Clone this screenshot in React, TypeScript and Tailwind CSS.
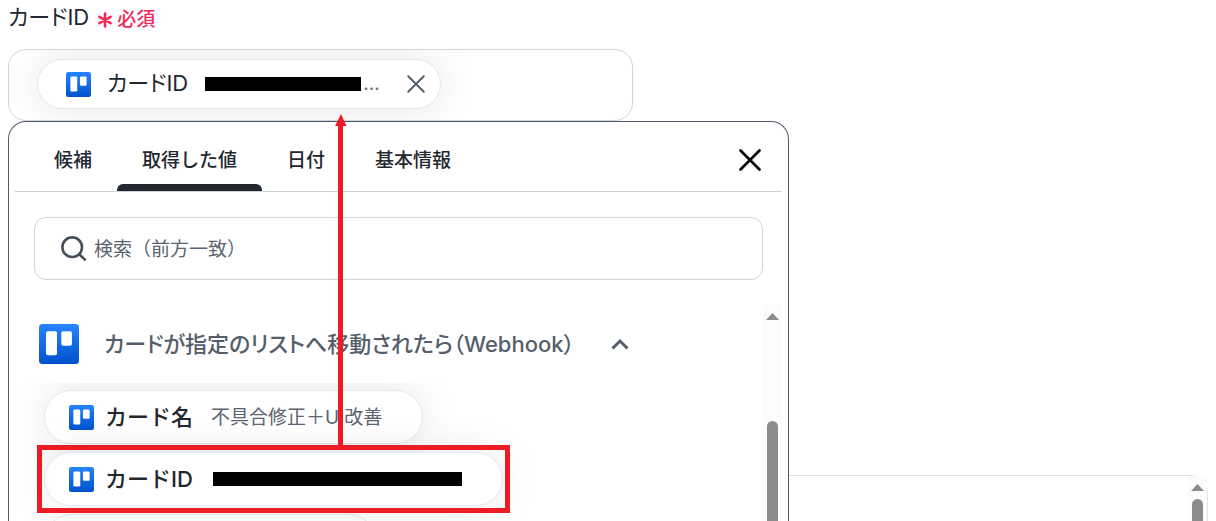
import { useState } from "react";

const TrelloIcon = ({ className, id }: { className: string; id: string }) => (
  <svg viewBox="0 0 40 40" className={className} aria-hidden="true">
    <defs>
      <linearGradient id={id} x1="0" y1="0" x2="0" y2="1">
        <stop offset="0" stopColor="#2684ff" />
        <stop offset="1" stopColor="#0052cc" />
      </linearGradient>
    </defs>
    <rect width="40" height="40" rx="3.5" fill={`url(#${id})`} />
    <rect x="7" y="7.3" width="11" height="24" rx="2" fill="#fff" />
    <rect x="22.3" y="7.3" width="10.7" height="14.5" rx="2" fill="#fff" />
  </svg>
);

const CrossIcon = ({ className, width }: { className: string; width: number }) => (
  <svg
    viewBox="0 0 22 22"
    className={className}
    fill="none"
    stroke="currentColor"
    strokeWidth={width}
    strokeLinecap="round"
    aria-hidden="true">
    <path d="M1.5 1.5 20.5 20.5M20.5 1.5 1.5 20.5" />
  </svg>
);

const Scrollbar = ({ className }: { className: string }) => (
  <div
    className={`flex w-[19px] shrink-0 flex-col items-center bg-[#fbfbfb] pt-2 ${className}`}>
    <svg viewBox="0 0 13 7" className="h-[7px] w-[13px] shrink-0" aria-hidden="true">
      <path d="M6.5 0 13 7H0Z" fill="#8b8b8b" />
    </svg>
    <div className="w-[11px] flex-1 rounded-t-full bg-[#8b8b8b]" />
  </div>
);

const tabs = ["候補", "取得した値", "日付", "基本情報"];

const values = [
  { name: "カード名", value: "不具合修正＋UI改善", picked: false },
  { name: "カードID", value: "", picked: true },
];

export default function App() {
  const [activeTab, setActiveTab] = useState("取得した値");
  const [open, setOpen] = useState(true);

  return (
    <main className="relative flex h-screen flex-col overflow-hidden bg-white px-2 font-['Inter','Noto_Sans_CJK_JP',sans-serif] text-[#23272f]">
      <label
        htmlFor="card-id"
        className="flex h-[49px] shrink-0 items-start pt-[3px] text-[22px] leading-7 [font-feature-settings:'palt']">
        カードID
        <span className="flex items-center pt-[3px] pl-[9px] text-[19px] font-medium text-[#f12b5b]">
          <svg
            viewBox="0 0 14 16"
            className="mr-[5px] h-4 w-[14px]"
            fill="none"
            stroke="currentColor"
            strokeWidth="2.6"
            strokeLinecap="round"
            aria-hidden="true">
            <path d="M7 1.5v13M1.4 4.8l11.2 6.4M12.6 4.8 1.4 11.2" />
          </svg>
          必須
        </span>
      </label>

      <div className="flex h-[72px] w-full max-w-[625px] shrink-0 items-center overflow-hidden rounded-[18px] border border-[#cfd4dc] pr-4 pb-[2px] pl-7">
        <div className="flex h-[50px] shrink-0 items-center rounded-full border border-[#e4e7ee] bg-white pr-[15px] pl-7 shadow-[0_0_40px_rgba(0,0,0,0.1)]">
          <TrelloIcon className="size-[25px]" id="trello-field" />
          <span className="pb-[2px] pl-4 text-[22px] leading-7 [font-feature-settings:'palt']">
            カードID
          </span>
          <span className="ml-[17px] h-[14px] w-[156px] bg-black" />
          <span className="w-[46px] pl-[2px] text-[19px] leading-7 text-[#6b7280]">...</span>
          <button type="button" aria-label="クリア" className="text-[#555e6b]">
            <CrossIcon className="size-[18px]" width={2.4} />
          </button>
        </div>
        <input id="card-id" type="text" className="h-12 min-w-0 flex-1 outline-none" />
      </div>

      <div className="flex min-h-0 flex-1">
        <section className="flex w-full max-w-[781px] flex-col rounded-t-[18px] border border-b-0 border-[#4f5968] bg-white">
          <div className="mx-[6px] flex h-[70px] shrink-0 items-stretch border-b border-[#ccd0da] pr-[21px] pl-[14px]">
            <div role="tablist" className="flex flex-1">
              {tabs.map((tab) => (
                <button
                  key={tab}
                  type="button"
                  role="tab"
                  aria-selected={tab === activeTab}
                  onClick={() => setActiveTab(tab)}
                  className="flex flex-col items-stretch text-[19px] leading-7 font-medium">
                  <span className="flex-1 px-[25px] pt-[25px]">{tab}</span>
                  {tab === activeTab && (
                    <span className="h-[7px] rounded-t-[6px] bg-[#23272f]" />
                  )}
                </button>
              ))}
            </div>
            <button type="button" aria-label="閉じる" className="pt-[6px] text-black">
              <CrossIcon className="size-[22px]" width={2.6} />
            </button>
          </div>

          <div className="px-[25px] pt-[25px]">
            <div className="flex h-[63px] items-center gap-[7px] rounded-xl border border-[#cfd4dc] px-[26px]">
              <svg
                viewBox="0 0 26 26"
                className="size-[26px] shrink-0"
                fill="none"
                stroke="#464f5b"
                strokeWidth="2.6"
                aria-hidden="true">
                <circle cx="11.2" cy="11.2" r="9.8" />
                <path d="M18.4 18.4 24.6 24.4" />
              </svg>
              <input
                type="text"
                aria-label="検索"
                placeholder="検索（前方一致）"
                className="min-w-0 flex-1 pt-[3px] text-[19px] leading-7 outline-none placeholder:text-[#5b6470]"
              />
            </div>
          </div>

          <div className="mt-[25px] mr-[6px] flex min-h-0 flex-1 overflow-hidden">
            <div className="flex min-w-0 flex-1 flex-col">
              <button
                type="button"
                onClick={() => setOpen(!open)}
                className="flex h-[78px] shrink-0 items-center pl-[30px] text-[22px] leading-7 font-medium text-[#555e6b] [font-feature-settings:'palt']">
                <TrelloIcon className="size-10" id="trello-heading" />
                <span className="pl-[25px]">カードが指定のリストへ移動されたら（Webhook）</span>
                <svg
                  viewBox="0 0 18 12"
                  className={`ml-9 h-3 w-[18px] ${open ? "" : "rotate-180"}`}
                  fill="none"
                  stroke="currentColor"
                  strokeWidth="3"
                  aria-hidden="true">
                  <path d="M1.5 10.5 9 3l7.5 7.5" />
                </svg>
              </button>
              {open && (
                <ul className="flex min-h-0 flex-1 flex-col items-start gap-2 overflow-hidden pt-[7px] pl-[35px]">
                  {values.map((item, index) => (
                    <li key={item.name} className="relative shrink-0">
                      <button
                        type="button"
                        className="flex h-[54px] items-center rounded-full border border-[#e4e7ee] bg-white pr-10 pl-6 shadow-[0_0_40px_rgba(0,0,0,0.1)]">
                        <TrelloIcon className="size-[25px]" id={`trello-value-${index}`} />
                        <span className="w-[117px] pl-[11px] text-left text-[22px] leading-7 font-medium">
                          {item.name}
                        </span>
                        {item.value ? (
                          <span className="pt-[2px] text-[19px] leading-7 text-[#5b6470]">
                            {item.value}
                          </span>
                        ) : (
                          <span className="ml-[2px] h-[14px] w-[249px] bg-black" />
                        )}
                      </button>
                      {/* Highlight frame */}
                      {item.picked && (
                        <span className="pointer-events-none absolute -inset-[7px] border-5 border-[#ed1c24]" />
                      )}
                    </li>
                  ))}
                  <li className="h-[54px] w-[332px] shrink-0 rounded-full border border-[#e4e7ee] bg-white" />
                </ul>
              )}
            </div>
            <Scrollbar className="h-full gap-[101px]" />
          </div>
        </section>

        <aside className="mt-[354px] flex min-w-0 flex-1 justify-end rounded-tr-[18px] border-t border-r border-[#e3e3e3]">
          <Scrollbar className="gap-2" />
        </aside>
      </div>

      {/* Arrow from the picked value up to the field */}
      <svg
        viewBox="0 0 12 332"
        className="pointer-events-none absolute top-[114px] left-[335px] h-[332px] w-3"
        fill="#ed1c24"
        aria-hidden="true">
        <path d="M6 0 11.5 12H8v320H3V12H0Z" />
      </svg>
    </main>
  );
}
